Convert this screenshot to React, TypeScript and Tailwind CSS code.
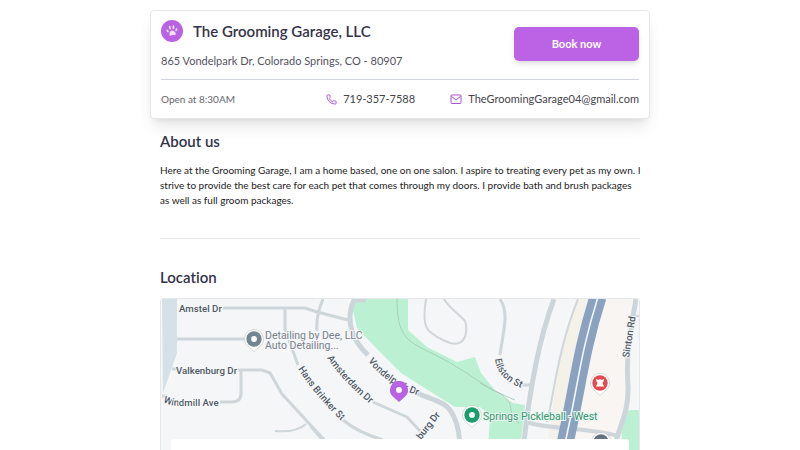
import type { ReactNode } from "react";
import { Phone } from "lucide-react";

const about =
  "Here at the Grooming Garage, I am a home based, one on one salon. I aspire to treating every pet as my own. I strive to provide the best care for each pet that comes through my doors. I provide bath and brush packages as well as full groom packages.";

function PawBadge() {
  return (
    <svg viewBox="0 0 22 22" className="size-[22px] shrink-0" aria-hidden="true">
      <circle cx="11" cy="11" r="11" fill="#b963e4" />
      <g fill="#f3e0fb" transform="rotate(-8 11 11)">
        <ellipse cx="9.4" cy="7.4" rx="1" ry="1.9" transform="rotate(-8 9.4 7.4)" />
        <ellipse cx="12.9" cy="7.4" rx="1" ry="1.9" transform="rotate(10 12.9 7.4)" />
        <ellipse cx="6.7" cy="10.3" rx=".9" ry="1.6" transform="rotate(-28 6.7 10.3)" />
        <ellipse cx="15.5" cy="10.3" rx=".9" ry="1.6" transform="rotate(28 15.5 10.3)" />
        <path d="M11.1 10.5c-1.6 0-3.2 2.2-3.2 3.6 0 1.2 1 1.5 1.8 1.3 1-.3 1.900-.3 2.800 0 .9.2 1.900-.1 1.900-1.300 0-1.400-1.700-3.600-3.300-3.600z" />
      </g>
    </svg>
  );
}

function BusinessCard() {
  return (
    <header className="rounded-sm border border-gray-200 bg-white px-[10px] shadow-lg">
      <div className="flex items-center justify-between border-b border-gray-300 pt-2 pb-[10px]">
        <div>
          <div className="flex items-center gap-[10px]">
            <PawBadge />
            <h1 className="text-[15px] leading-6 font-semibold text-[#34324a]">
              The Grooming Garage, LLC
            </h1>
          </div>
          <p className="mt-[10px] text-[11px] leading-4 text-[#54525f]">
            865 Vondelpark Dr, Colorado Springs, CO - 80907
          </p>
        </div>
        <button
          type="button"
          className="h-[34px] w-[125px] rounded-[5px] bg-[#bb62e5] text-[11px] font-bold text-white shadow-md"
        >
          Book now
        </button>
      </div>
      <div className="flex h-[38px] items-center justify-between text-[11px] text-[#45444c]">
        <span className="w-[130px] text-[10px] text-[#666570]">Open at 8:30AM</span>
        <a href="tel:719-357-7588" className="flex items-center gap-[6px]">
          <Phone className="size-[11px] text-[#a950d4]" strokeWidth={2} />
          719-357-7588
        </a>
        <a href="mailto:TheGroomingGarage04@gmail.com" className="flex items-center gap-[6px]">
          <svg viewBox="0 0 12 12" className="size-3 text-[#a950d4]" fill="none" stroke="currentColor" aria-hidden="true">
            <rect x="1" y="2" width="10" height="8.5" rx=".8" />
            <path d="M1.3 3.2L6 7l4.7-3.8" />
          </svg>
          TheGroomingGarage04@gmail.com
        </a>
      </div>
    </header>
  );
}

type PinProps = {
  x: number;
  y: number;
  fill: string;
  ring?: boolean;
  children?: ReactNode;
};

function Pin({ x, y, fill, ring = true, children }: PinProps) {
  return (
    <g transform={`translate(${x} ${y})`}>
      {ring && (
        <path
          d="M0-9.5a9.500 9.500 0 0 1 6.500 16.300L0 12.500l-6.500-5.700A9.500 9.500 0 0 1 0-9.500z"
          fill="#fff"
          stroke="#c3c8cc"
          strokeWidth=".7"
        />
      )}
      {ring ? (
        <circle r="7.7" fill={fill} />
      ) : (
        <path d="M0-9a9 9 0 0 1 6.500 15.200L0 12l-6.500-5.800A9 9 0 0 1 0-9z" fill={fill} />
      )}
      {children ?? <circle r="2.9" fill="#fff" />}
    </g>
  );
}

function LocationMap() {
  return (
    <svg
      viewBox="1 0 478 152"
      className="block w-full"
      role="img"
      aria-label="Map of the salon's neighborhood"
      fontFamily="Roboto, sans-serif"
    >
      <rect width="480" height="152" fill="#f5f6f7" />
      <path d="M418 0C400 50 394 95 387 152h10C412 100 410 60 431 0z" fill="#f4f1e8" />
      <path d="M445 0C424 60 424 100 408 152h47l8-30 5-30-2-35 8-57z" fill="#f9f5f2" />

      {/* parkland */}
      <path
        d="M193 2l12-2h43v31l19 17 30 15 18-5 6 16 16 20 16 10 12 2-5 46h-32l2-35-10-9-25 0-24-15-30-19-23-23-21-22-4-18z"
        fill="#bcf0d2"
      />
      <path d="M462 152c-1-15-1-39 8-41h10v41z" fill="#bcf0d2" />

      {/* river, creek and footpaths */}
      <path d="M2 0h15v54L3 94z" fill="#d5e1e6" />
      <g fill="none" stroke="#a6cfb9" strokeWidth="1">
        <path d="M237 0c0 24 4 34 13 42 12 9 30 15 45 25 18 10 30 22 60 34" />
        <path d="M320 84c12 8 28 12 30 22s2 14 9 18" />
      </g>
      <path
        d="M266 0c-2 12-3 24 2 31 6 6 14 10 22 13 8 2 12 0 15-6 2-6 2-10 0-16-6-7-16-13-21-22"
        fill="none"
        stroke="#d0d5d8"
        strokeWidth="2"
      />

      {/* minor streets */}
      <g fill="none" stroke="#ced6da" strokeWidth="3" strokeLinejoin="round">
        <path d="M62 9h83l12 4 31 8" />
        <path d="M17 40h68" />
        <path d="M125 10v20l13 36" />
        <path d="M163 0c-5 12-7 22-6 32" />
        <path d="M12 70h6M78 71h24l8 3 12 21 46 50" />
        <path d="M81 72v22q0 9-9 9H60M2 97h5" />
        <path d="M115 132q21 2 31-7" strokeWidth="2" />
        <path d="M183 121q14 12 40 20M213 103l34 15 14 15" />
        <path d="M150 127l12 14" strokeWidth="2" />
        <path d="M340 0c9 14 4 28 0 56M362 86h8" />
        <path d="M470 17h10" strokeWidth="2" />
      </g>
      <g fill="none" stroke="#ccd5d9" strokeWidth="5">
        <path d="M206 1h-12c-10 22 0 42 14 55M257 94c18 8 30 8 37 24q6 12 6 34" />
        <path d="M394 0c-16 42-25 94-31 152" />
        <path d="M476 0c-7 40-10 60-8 86 1 30-9 38-14 66" />
      </g>
      <path d="M418 0c-20 50-24 95-31 123" fill="none" stroke="#ced6da" strokeWidth="2" />
      <path d="M366 123c25 8 60 5 92 14" fill="none" stroke="#ced6da" strokeWidth="4" />

      {/* highway */}
      <path d="M438-2C419 58 418 90 403 153" fill="none" stroke="#8aa2bf" strokeWidth="17" />
      <path d="M438-2C419 58 418 90 403 153" fill="none" stroke="#f3f5f7" strokeWidth="1.6" />

      {/* labels */}
      <defs>
        <path id="windmill" d="M3 103q8 4 16 4h50" />
        <path id="hans" d="M138 70q20 31 54 62" />
        <path id="amsterdam" d="M167 59q20 29 58 58" />
        <path id="vondelpark" d="M208 62q22 28 62 38" />
        <path id="ellston" d="M335 60q2 23 38 33" />
      </defs>
      <g
        fontSize="9.7"
        fontWeight="500"
        fill="#4f5965"
        stroke="#f6f7f8"
        strokeWidth="2"
        paintOrder="stroke"
      >
        <text x="19" y="13">Amstel Dr</text>
        <text x="16" y="75">Valkenburg Dr</text>
        <text><textPath href="#windmill">Windmill Ave</textPath></text>
        <text><textPath href="#hans">Hans Brinker St</textPath></text>
        <text><textPath href="#amsterdam">Amsterdam Dr</textPath></text>
        <text><textPath href="#vondelpark">Vondelpark Dr</textPath></text>
        <text><textPath href="#ellston">Ellston St</textPath></text>
        <text transform="translate(469 59) rotate(-81)">Sinton Rd</text>
        <text transform="translate(261 141) rotate(-52)">burg Dr</text>
        <g fontWeight="400" fontSize="10.5" fill="#77828b">
          <text x="105" y="40">Detailing by Dee, LLC</text>
          <text x="105" y="50">Auto Detailing...</text>
        </g>
        <text x="323" y="121" fontSize="10.5" fontWeight="400" stroke="#e6f6ee" fill="#3d9473">
          Springs Pickleball - West
        </text>
      </g>

      {/* places */}
      <Pin x={94} y={40} fill="#73868f" />
      <Pin x={239} y={91} fill="#b963e4" ring={false} />
      <Pin x={312} y={116} fill="#1b9e6d" />
      <Pin x={440} y={84} fill="#e5484f">
        <path d="M-4-4l2.500 1 1.500-1 1.500 1 2.500-1-.5 2.500-1 1.500 1.500 3.500H-4l1.500-3.500-1-1.500z" fill="#fff" />
      </Pin>
      <Pin x={441} y={143} fill="#66737e" />
    </svg>
  );
}

export default function App() {
  return (
    <main className="mx-auto max-w-[500px] pt-[10px] font-['Lato',sans-serif] [font-variant-ligatures:none]">
      <BusinessCard />
      <div className="px-[10px]">
        <section className="border-b border-gray-200 pt-[10px] pb-[30px]">
          <h2 className="text-[15px] leading-6 font-semibold text-[#34324a]">About us</h2>
          <p className="-mr-[2px] mt-[10px] text-[10px] leading-[15px] text-[#222]">{about}</p>
        </section>
        <section className="pt-[26px]">
          <h2 className="text-[15px] leading-6 font-semibold text-[#34324a]">Location</h2>
          <div className="relative mt-[9px] overflow-hidden rounded-t-[4px] border border-b-0 border-gray-200">
            <LocationMap />
            <div className="absolute inset-x-[10px] bottom-0 h-3 rounded-t-[3px] bg-white" />
          </div>
        </section>
      </div>
    </main>
  );
}
